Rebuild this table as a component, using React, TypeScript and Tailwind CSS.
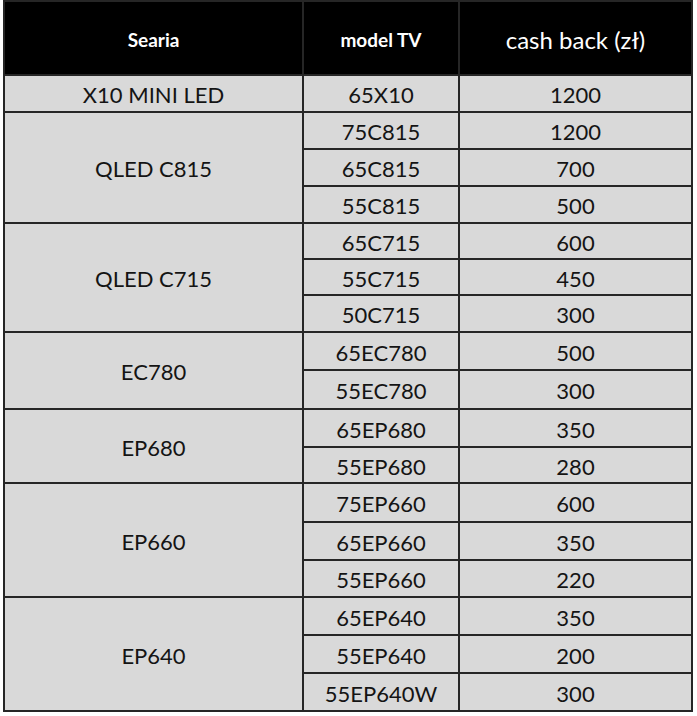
const groups = [
  { name: "X10 MINI LED", items: [["65X10", "1200"]] },
  {
    name: "QLED C815",
    items: [
      ["75C815", "1200"],
      ["65C815", "700"],
      ["55C815", "500"],
    ],
  },
  {
    name: "QLED C715",
    items: [
      ["65C715", "600"],
      ["55C715", "450"],
      ["50C715", "300"],
    ],
  },
  {
    name: "EC780",
    items: [
      ["65EC780", "500"],
      ["55EC780", "300"],
    ],
  },
  {
    name: "EP680",
    items: [
      ["65EP680", "350"],
      ["55EP680", "280"],
    ],
  },
  {
    name: "EP660",
    items: [
      ["75EP660", "600"],
      ["65EP660", "350"],
      ["55EP660", "220"],
    ],
  },
  {
    name: "EP640",
    items: [
      ["65EP640", "350"],
      ["55EP640", "200"],
      ["55EP640W", "300"],
    ],
  },
]

const spanClass: Record<number, string> = {
  1: "row-span-1",
  2: "row-span-2",
  3: "row-span-3",
}

const cell =
  "flex items-center justify-center bg-[#d9d9d9] pt-[2px] text-[22px] text-[#141414]"

export default function App() {
  return (
    <div className="min-h-[716px] bg-white font-[family-name:Lato,'Open_Sans',sans-serif]">
      <div className="ml-[3px] grid w-[690px] grid-cols-[297px_154px_231px] grid-rows-[72px_35px_35px_35px_35px_34px_34px_35px_36px_37px_36px_34px_37px_36px_35px_36px_36px_36px] gap-[2px] border-2 border-[#262626] bg-[#262626]">
        <div className="flex items-center justify-center bg-black pt-1 text-[19px] font-bold text-white">
          Searia
        </div>
        <div className="flex items-center justify-center bg-black pt-1 text-[19px] font-bold text-white">
          model TV
        </div>
        <div className="flex items-center justify-center bg-black pt-1 text-[24px] font-normal text-white">
          cash back (zł)
        </div>
        {groups.map((group) => [
          <div key={group.name} className={`${cell} ${spanClass[group.items.length]}`}>
            {group.name}
          </div>,
          ...group.items.flatMap(([model, cash]) => [
            <div key={model} className={cell}>
              {model}
            </div>,
            <div key={model + "-cash"} className={cell}>
              {cash}
            </div>,
          ]),
        ])}
      </div>
    </div>
  )
}
